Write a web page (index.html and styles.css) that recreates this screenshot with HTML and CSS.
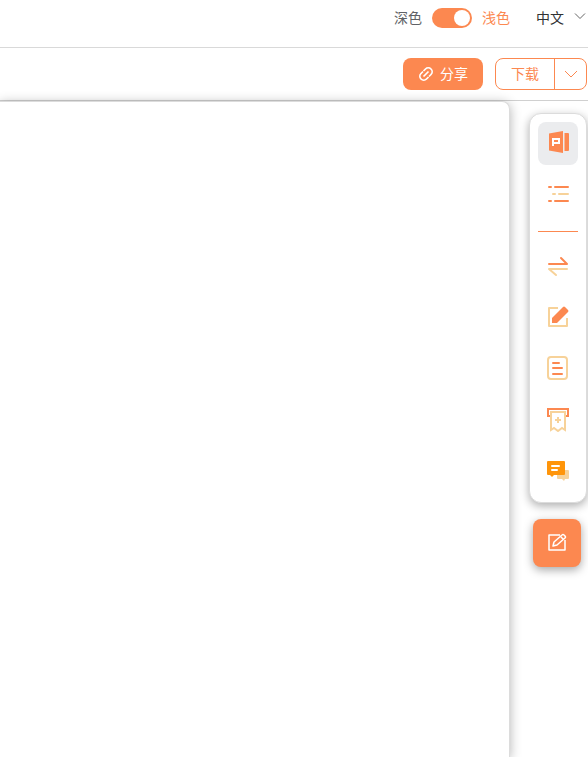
FILE: index.html
```html
<!DOCTYPE html>
<html lang="zh-CN">
<head>
<meta charset="utf-8">
<meta name="viewport" content="width=device-width, initial-scale=1">
<title>编辑器</title>
<link rel="stylesheet" href="styles.css">
</head>
<body>
<header class="topbar">
  <label class="theme">
    <span class="label theme-dark">深色</span>
    <input class="switch" type="checkbox" role="switch" checked>
    <span class="label theme-light">浅色</span>
  </label>
  <button class="language" type="button"><span class="label">中文</span>
    <svg width="12" height="12" viewBox="0 0 12 12" fill="none" stroke="#666" aria-hidden="true"><path d="M1 1.500l5 5 5-5"/></svg>
  </button>
</header>
<div class="toolbar">
  <button class="share" type="button">
    <svg width="16" height="16" viewBox="0 0 16 16" fill="none" stroke="#fff" stroke-width="1.700" aria-hidden="true"><path d="M5.500 5L7.500 3a3.900 3.900 0 0 1 5.500 0 3.900 3.900 0 0 1 0 5.500l-2 2M10.500 11l-2 2A3.900 3.900 0 0 1 3 13a3.900 3.900 0 0 1 0-5.500l2-2M5.500 10.500l5-5"/></svg>
    <span class="label">分享</span>
  </button>
  <div class="download">
    <button class="download-main" type="button"><span class="label">下载</span></button>
    <button class="download-more" type="button" aria-label="更多">
      <svg width="14" height="8" viewBox="0 0 14 8" fill="none" stroke="#fc8850" aria-hidden="true"><path d="M1 1l6 6 6-6"/></svg>
    </button>
  </div>
</div>
<main class="workspace">
  <section class="paper"></section>
  <aside class="side">
    <nav class="tools">
      <button class="tool active" type="button" aria-label="PPT">
        <svg width="24" height="24" viewBox="0 0 24 24" aria-hidden="true"><path d="M3 2.500L17 0v22L3 19.500z" fill="#fc8850"/><path d="M18 2h4q1 0 1 1v16q0 1-1 1h-4z" fill="#fc8850"/><path d="M18.500 2v18" stroke="#fbb999"/><path d="M7 15V8h6v4H7" fill="none" stroke="#fff" stroke-width="2"/></svg>
      </button>
      <button class="tool" type="button" aria-label="大纲">
        <svg width="24" height="24" viewBox="0 0 24 24" fill="none" stroke="#fc8850" stroke-width="2" stroke-linecap="round" aria-hidden="true"><path d="M3 5h2M9 5h13M3 19h2M9 19h13"/><path d="M7 12h2M13 12h9" stroke="#f7d299"/></svg>
      </button>
      <hr class="divider">
      <button class="tool" type="button" aria-label="切换">
        <svg width="24" height="24" viewBox="0 0 24 24" fill="none" stroke="#fc8850" stroke-width="2" stroke-linecap="round" stroke-linejoin="round" aria-hidden="true"><path d="M3 10h18l-6-6"/><path d="M21 15H3l7 6" stroke="#f7d299"/></svg>
      </button>
      <button class="tool" type="button" aria-label="编辑">
        <svg width="24" height="24" viewBox="0 0 24 24" fill="none" aria-hidden="true"><path d="M12 3H3v18h18v-8" stroke="#f7d299" stroke-width="2" stroke-linejoin="round"/><path d="M6 13L17 2q1-1 2 0l3 3q1 1 0 2L11 18H6z" fill="#fc8850"/></svg>
      </button>
      <button class="tool" type="button" aria-label="文档">
        <svg width="24" height="24" viewBox="0 0 24 24" fill="none" stroke-width="2" stroke-linecap="round" aria-hidden="true"><rect x="2" y="1" width="19" height="22" rx="3" stroke="#f7d299"/><path d="M7 7h6M7 12h9M7 18h9" stroke="#fc8850"/></svg>
      </button>
      <button class="tool" type="button" aria-label="模板">
        <svg width="24" height="26" viewBox="0 0 24 26" fill="none" stroke-width="2" aria-hidden="true"><path d="M4 10H2V3h20v7h-2" stroke="#fc8850"/><path d="M5 6h14v18l-3-2-4 3-4-3-3 2zM12 11v6M9 14h6" stroke="#f7d299"/></svg>
      </button>
      <button class="tool" type="button" aria-label="备注">
        <svg width="24" height="24" viewBox="0 0 24 24" aria-hidden="true"><path d="M12 12h10q1 0 1 1v7q0 1-1 1h-3l-1 2-2-2h-4q-1 0-1-1v-7z" fill="#f7d299"/><path d="M2 3h16q1 0 1 1v12q0 1-1 1H8l-2 2-2-2H2q-1 0-1-1V4q0-1 1-1z" fill="#ff950a"/><path d="M6 8h7M6 12h5" stroke="#fff" stroke-width="2" stroke-linecap="round"/></svg>
      </button>
    </nav>
    <button class="edit" type="button" aria-label="编辑内容">
      <svg width="20" height="20" viewBox="0 0 20 20" fill="none" stroke="#fff" stroke-width="1.500" stroke-linejoin="round" aria-hidden="true"><path d="M13 2H2v15h16V7"/><path d="M6 13l1-4 8-7q1-1 2 0l1 1q1 1 0 2l-8 7zM14 4l2 2"/></svg>
    </button>
  </aside>
</main>
</body>
</html>
```
FILE: styles.css
```css
* { box-sizing: border-box; }

body {
  margin: 0;
  height: 100vh;
  display: flex;
  flex-direction: column;
  overflow: hidden;
  background: #fff;
  font: 14px/20px "Noto Sans CJK SC", sans-serif;
}

button {
  display: flex;
  align-items: center;
  justify-content: center;
  padding: 0;
  border: 0;
  background: none;
  color: inherit;
  font: inherit;
  cursor: pointer;
}

svg { display: block; flex: none; }

.label { padding-bottom: 2px; }

.topbar {
  flex: none;
  display: flex;
  justify-content: flex-end;
  gap: 26px;
  height: 48px;
  padding: 8px 2px 20px 0;
  border-bottom: 1px solid #d9d9d9;
}

.theme {
  display: flex;
  align-items: center;
  gap: 10px;
}

.theme-dark { color: #606266; }
.theme-light { color: #fc8850; }

.switch {
  appearance: none;
  display: flex;
  justify-content: flex-end;
  width: 40px;
  height: 20px;
  margin: 0;
  padding: 2px;
  border-radius: 10px;
  background: #fc8850;
}

.switch::before {
  content: "";
  width: 16px;
  height: 16px;
  border-radius: 50%;
  background: #fff;
}

.language {
  gap: 10px;
  color: #303133;
}

.toolbar {
  flex: none;
  display: flex;
  justify-content: flex-end;
  gap: 12px;
  padding: 10px 1px 10px 0;
  border-bottom: 1px solid #d0d0d0;
}

.share {
  gap: 6px;
  width: 80px;
  height: 32px;
  border-radius: 8px;
  background: #fc8850;
  color: #fff;
}

.download {
  display: flex;
  width: 92px;
  height: 32px;
  border: 1px solid #fc8850;
  border-radius: 8px;
  color: #fc8850;
}

.download-main { flex: 1; }

.download-more {
  width: 32px;
  border-left: 1px solid #fc8850;
}

.workspace {
  flex: 1;
  display: flex;
  gap: 19px;
  min-height: 0;
  padding-right: 1px;
}

.paper {
  flex: 1;
  border: 1px solid #dcdcdc;
  border-width: 1px 1px 0 0;
  border-radius: 0 8px 0 0;
  background: #fff;
  box-shadow: 0 2px 12px rgba(0, 0, 0, 0.3);
}

.side {
  display: flex;
  flex-direction: column;
  align-items: flex-end;
  gap: 16px;
  padding-top: 12px;
}

.tools {
  display: flex;
  flex-direction: column;
  gap: 8px;
  padding: 8px 8px 10px;
  border: 1px solid #dcdcdc;
  border-radius: 12px;
  background: #fff;
  box-shadow: 0 3px 10px rgba(0, 0, 0, 0.32);
}

.tool {
  width: 40px;
  height: 43px;
  padding-bottom: 2px;
  border-radius: 8px;
}

.active { background: #ebecee; }

.divider {
  width: 100%;
  margin: 7px 0 5px;
  border: 0;
  border-top: 1px solid #fc8850;
}

.edit {
  width: 48px;
  height: 48px;
  margin-right: 6px;
  border-radius: 8px;
  background: #fc8850;
  box-shadow: 0 3px 10px rgba(0, 0, 0, 0.35);
}
```
